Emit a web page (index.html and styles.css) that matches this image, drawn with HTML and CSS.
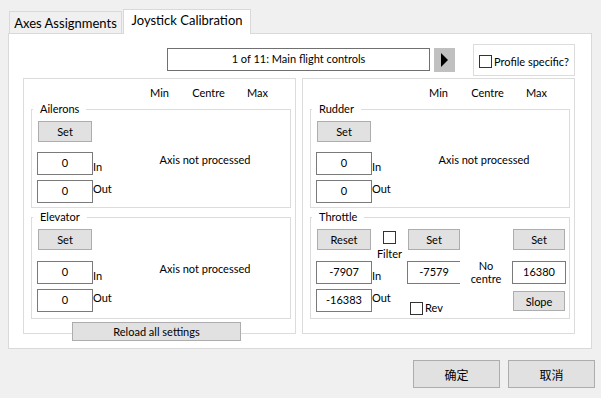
FILE: index.html
```html
<!DOCTYPE html>
<html>
<head>
    <title>Joystick Calibration</title>
    <link rel="stylesheet" href="styles.css">
</head>
<body>
    <div class="dialog">
        <div class="tabs">
            <div class="tab">Axes Assignments</div>
            <div class="tab active">Joystick Calibration</div>
        </div>

        <div class="page">
            <div class="page-top">
                <div class="preset">1 of 11: Main flight controls</div>
                <button class="next" title="Next">
                    <svg width="7" height="14" viewBox="0 0 7 14" xmlns="http://www.w3.org/2000/svg">
                        <path d="M0 0L7 7L0 14z"/>
                    </svg>
                </button>
                <div class="profile">
                    <span class="check"></span>
                    <span>Profile specific?</span>
                </div>
            </div>

            <div class="panels">
                <!-- Left: ailerons / elevator -->
                <div class="panel">
                    <div class="cols"><span>Min</span><span>Centre</span><span>Max</span></div>

                    <fieldset class="axis">
                        <legend>Ailerons</legend>
                        <div class="axis-body">
                            <button class="btn set">Set</button>
                            <div class="val in-val">0</div>
                            <span class="lbl in">In</span>
                            <span class="msg">Axis not processed</span>
                            <div class="val out-val">0</div>
                            <span class="lbl out">Out</span>
                        </div>
                    </fieldset>

                    <fieldset class="axis lower">
                        <legend>Elevator</legend>
                        <div class="axis-body">
                            <button class="btn set">Set</button>
                            <div class="val in-val">0</div>
                            <span class="lbl in">In</span>
                            <span class="msg">Axis not processed</span>
                            <div class="val out-val">0</div>
                            <span class="lbl out">Out</span>
                        </div>
                    </fieldset>

                    <button class="btn reload">Reload all settings</button>
                </div>

                <!-- Right: rudder / throttle -->
                <div class="panel">
                    <div class="cols"><span>Min</span><span>Centre</span><span>Max</span></div>

                    <fieldset class="axis">
                        <legend>Rudder</legend>
                        <div class="axis-body">
                            <button class="btn set">Set</button>
                            <div class="val in-val">0</div>
                            <span class="lbl in">In</span>
                            <span class="msg">Axis not processed</span>
                            <div class="val out-val">0</div>
                            <span class="lbl out">Out</span>
                        </div>
                    </fieldset>

                    <fieldset class="axis lower">
                        <legend>Throttle</legend>
                        <div class="throttle-body">
                            <button class="btn t-reset">Reset</button>
                            <div class="t-filter">
                                <span class="check"></span>
                                <span class="filter-label">Filter</span>
                            </div>
                            <button class="btn t-set-min">Set</button>
                            <button class="btn t-set-max">Set</button>

                            <div class="val t-in">-7907</div>
                            <span class="t-lbl t-in-lbl">In</span>
                            <div class="val t-min">-7579</div>
                            <div class="t-centre">No<br>centre</div>
                            <div class="val t-max">16380</div>

                            <div class="val t-out">-16383</div>
                            <span class="t-lbl t-out-lbl">Out</span>
                            <div class="t-rev">
                                <span class="check"></span>
                                <span>Rev</span>
                            </div>
                            <button class="btn t-slope">Slope</button>
                        </div>
                    </fieldset>
                </div>
            </div>
        </div>

        <div class="actions">
            <button class="btn dlg-btn">确定</button>
            <button class="btn dlg-btn">取消</button>
        </div>
    </div>
</body>
</html>
```

FILE: styles.css
```css
body {
    margin: 0;
    width: 601px;
    height: 398px;
    overflow: hidden;
    background: #f0f0f0;
    font-family: Lato, "Noto Sans CJK SC", sans-serif;
    font-size: 11px;
    color: #000;
}
.dialog {
    padding: 9px 0 0 8px;
}

/* Tabs */
.tabs {
    display: flex;
    align-items: flex-end;
    padding-left: 1px;
    font-size: 13px;
}
.tab {
    box-sizing: border-box;
    width: 113px;
    height: 22px;
    padding-top: 3px;
    border: 1px solid #d9d9d9;
    border-bottom: none;
    background: #f0f0f0;
    text-align: center;
    line-height: 16px;
    white-space: nowrap;
}
.tab.active {
    position: relative;
    z-index: 1;
    width: 128px;
    height: 25px;
    padding-top: 2px;
    margin-left: 1px;
    margin-bottom: -1px;
    background: #fff;
}

/* Tab page */
.page {
    box-sizing: border-box;
    width: 584px;
    height: 316px;
    padding-top: 10px;
    background: #fff;
    border: 1px solid #d9d9d9;
}
.page-top {
    display: flex;
    align-items: flex-start;
    padding-left: 158px;
}
.preset {
    box-sizing: border-box;
    width: 263px;
    height: 23px;
    margin-top: 4px;
    border: 1px solid #707070;
    text-align: center;
    line-height: 20px;
}
.next {
    width: 21px;
    height: 24px;
    margin: 4px 0 0 4px;
    padding: 0;
    border: none;
    background: #c0c0c0;
    display: flex;
    align-items: center;
    justify-content: center;
}
.profile {
    box-sizing: border-box;
    width: 102px;
    height: 32px;
    margin-left: 18px;
    padding: 2px 0 0 5px;
    border: 1px solid #dcdcdc;
    display: flex;
    align-items: center;
    gap: 2px;
    white-space: nowrap;
}
.check {
    box-sizing: border-box;
    width: 13px;
    height: 13px;
    flex-shrink: 0;
    border: 1px solid #333;
    background: #fff;
}

/* Panels */
.panels {
    display: flex;
    gap: 6px;
    margin: 2px 0 0 14px;
}
.panel {
    box-sizing: border-box;
    width: 273px;
    padding-left: 7px;
    border: 1px solid #dcdcdc;
}
.cols {
    display: flex;
    padding: 6px 0 0 104px;
    line-height: 16px;
}
.cols span {
    width: 49px;
    text-align: center;
}

/* Group boxes */
.axis {
    box-sizing: border-box;
    width: 260px;
    min-inline-size: 0;
    margin: 0;
    padding: 0 0 4px 5px;
    border: 1px solid #dcdcdc;
}
.axis.lower {
    margin-top: 1px;
    padding-bottom: 6px;
}
.axis legend {
    margin-left: -4px;
    padding: 0 7px;
    line-height: 16px;
}
.axis-body {
    display: grid;
    grid-template-columns: 56px 36px 152px;
    grid-template-rows: 26px 23px 23px;
    row-gap: 5px;
    padding-top: 4px;
}
.lower .axis-body {
    grid-template-rows: 27px 23px 23px;
}

.btn {
    box-sizing: border-box;
    height: 21px;
    padding: 0;
    border: 1px solid #adadad;
    background: #e1e1e1;
    color: #000;
    font: inherit;
}
.set {
    grid-column: 1;
    grid-row: 1;
    width: 54px;
    margin-left: 1px;
}
.val {
    box-sizing: border-box;
    height: 23px;
    border: 1px solid #7a7a7a;
    background: #fff;
    text-align: center;
    line-height: 20px;
}
.in-val { grid-column: 1; grid-row: 2; }
.out-val { grid-column: 1; grid-row: 3; }
.lbl, .t-lbl {
    grid-column: 2;
    line-height: 16px;
}
.lbl.in { grid-row: 2; align-self: end; }
.lbl.out { grid-row: 3; align-self: start; margin-top: 1px; }
.msg {
    grid-column: 3;
    grid-row: 2;
    align-self: start;
    text-align: center;
    line-height: 16px;
}

.reload {
    width: 169px;
    height: 19px;
    margin: 3px 0 -8px 41px;
    display: block;
    position: relative;
}

/* Throttle */
.throttle-body {
    display: grid;
    grid-template-columns: 56px 35px 53px 52px 54px;
    grid-template-rows: 21px 11px 23px 5px 23px;
    padding-top: 4px;
}
.t-reset { grid-column: 1; grid-row: 1; width: 54px; margin-left: 1px; }
.t-set-min { grid-column: 3; grid-row: 1; width: 52px; margin-left: 1px; }
.t-set-max { grid-column: 5; grid-row: 1; width: 52px; margin-left: 1px; }
.t-filter {
    grid-column: 2;
    grid-row: 1 / 3;
    display: flex;
    flex-direction: column;
    align-items: center;
    padding-top: 2px;
}
.filter-label {
    margin-top: 4px;
    line-height: 12px;
}
.t-in { grid-column: 1; grid-row: 3; }
.t-in-lbl { grid-row: 3; align-self: end; }
.t-min { grid-column: 3; grid-row: 3; border-right: none; }
.t-centre {
    grid-column: 4;
    grid-row: 3 / 6;
    align-self: start;
    margin-top: -2px;
    text-align: center;
    line-height: 13px;
}
.t-max { grid-column: 5; grid-row: 3; }
.t-out { grid-column: 1; grid-row: 5; }
.t-out-lbl { grid-row: 5; align-self: start; margin-top: 1px; }
.t-rev {
    grid-column: 3;
    grid-row: 5;
    align-self: start;
    display: flex;
    align-items: center;
    gap: 2px;
    margin: 12px 0 0 3px;
    line-height: 14px;
}
.t-slope { grid-column: 5; grid-row: 5; width: 52px; height: 20px; margin: 2px 0 0 1px; }

/* Dialog buttons */
.actions {
    display: flex;
    justify-content: flex-end;
    gap: 8px;
    margin-top: 11px;
    padding-right: 6px;
}
.dlg-btn {
    width: 87px;
    height: 28px;
    font-family: "Noto Sans CJK SC", sans-serif;
    font-size: 12px;
}
```
